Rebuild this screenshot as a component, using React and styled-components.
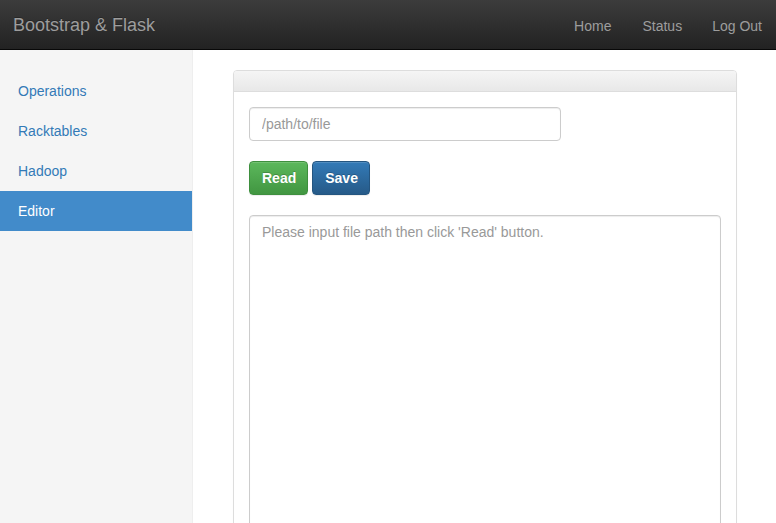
import React from "react";
import styled, { createGlobalStyle } from "styled-components";

const Global = createGlobalStyle`
  html, body { margin: 0; padding: 0; background: #fff; }
  body { font-family: "Liberation Sans", Arial, sans-serif; font-size: 14px; color: #333; }
  * { box-sizing: border-box; }
`;

const Navbar = styled.div`
  height: 50px;
  display: flex;
  align-items: center;
  justify-content: space-between;
  padding-top: 2px;
  background: linear-gradient(to bottom, #3c3c3c 0%, #222 100%);
  border-bottom: 1px solid #080808;
`;

const Brand = styled.div`
  color: #9d9d9d;
  font-size: 18px;
  padding-left: 13px;
  text-shadow: 0 -1px 0 rgba(0,0,0,.25);
`;

const NavLinks = styled.div`
  display: flex;
`;

const NavLink = styled.a`
  color: #9d9d9d;
  font-size: 14px;
  padding: 0 15px;
  text-decoration: none;
  &:first-child { padding-right: 16px; }
  &:last-child { padding-right: 14px; }
`;

const Body = styled.div`
  display: flex;
  height: 473px;
`;

const Sidebar = styled.div`
  width: 193px;
  flex: none;
  background: #f5f5f5;
  border-right: 1px solid #eee;
  padding-top: 21px;
`;

const SideItem = styled.a`
  display: block;
  height: 40px;
  line-height: 40px;
  padding-left: 18px;
  font-size: 14px;
  text-decoration: none;
  color: ${(p) => (p.$active ? "#fff" : "#337ab7")};
  background: ${(p) => (p.$active ? "#428bca" : "transparent")};
`;

const Main = styled.div`
  flex: 1;
  padding: 20px 39px 0 40px;
  overflow: hidden;
`;

const Panel = styled.div`
  border: 1px solid #ddd;
  border-radius: 4px;
  height: 520px;
  box-shadow: 0 1px 1px rgba(0,0,0,.05);
`;

const PanelHeading = styled.div`
  height: 21px;
  background: linear-gradient(to bottom, #f5f5f5 0%, #e8e8e8 100%);
  border-bottom: 1px solid #ddd;
  border-radius: 3px 3px 0 0;
`;

const PanelBody = styled.div`
  padding: 15px;
  display: flex;
  flex-direction: column;
  align-items: flex-start;
  gap: 20px;
`;

const Input = styled.input`
  width: 312px;
  height: 34px;
  padding: 6px 12px;
  font-family: inherit;
  font-size: 14px;
  border: 1px solid #ccc;
  border-radius: 4px;
  box-shadow: inset 0 1px 1px rgba(0,0,0,.075);
  color: #555;
  &::placeholder { color: #999; }
`;

const Buttons = styled.div`
  display: flex;
  gap: 4px;
`;

const Button = styled.button`
  height: 34px;
  padding: 0 11px 0 12px;
  font-family: inherit;
  font-size: 14px;
  font-weight: bold;
  color: #fff;
  border-radius: 4px;
  text-shadow: 0 -1px 0 rgba(0,0,0,.2);
  box-shadow: inset 0 1px 0 rgba(255,255,255,.15), 0 1px 1px rgba(0,0,0,.075);
  border: 1px solid ${(p) => (p.$variant === "success" ? "#3e8f3e" : "#245580")};
  background: ${(p) =>
    p.$variant === "success"
      ? "linear-gradient(to bottom, #5cb85c 0%, #419641 100%)"
      : "linear-gradient(to bottom, #337ab7 0%, #265a88 100%)"};
`;

const TextArea = styled.textarea`
  width: 472px;
  height: 400px;
  padding: 6px 12px;
  font-family: inherit;
  font-size: 14px;
  line-height: 20px;
  border: 1px solid #ccc;
  border-radius: 4px;
  resize: none;
  box-shadow: inset 0 1px 1px rgba(0,0,0,.075);
  &::placeholder { color: #999; }
`;

export default function App() {
  return (
    <>
      <Global />
      <Navbar>
        <Brand>Bootstrap &amp; Flask</Brand>
        <NavLinks>
          <NavLink>Home</NavLink>
          <NavLink>Status</NavLink>
          <NavLink>Log Out</NavLink>
        </NavLinks>
      </Navbar>
      <Body>
        <Sidebar>
          <SideItem>Operations</SideItem>
          <SideItem>Racktables</SideItem>
          <SideItem>Hadoop</SideItem>
          <SideItem $active>Editor</SideItem>
        </Sidebar>
        <Main>
          <Panel>
            <PanelHeading />
            <PanelBody>
              <Input placeholder="/path/to/file" />
              <Buttons>
                <Button $variant="success">Read</Button>
                <Button $variant="primary">Save</Button>
              </Buttons>
              <TextArea placeholder="Please input file path then click 'Read' button." />
            </PanelBody>
          </Panel>
        </Main>
      </Body>
    </>
  );
}
